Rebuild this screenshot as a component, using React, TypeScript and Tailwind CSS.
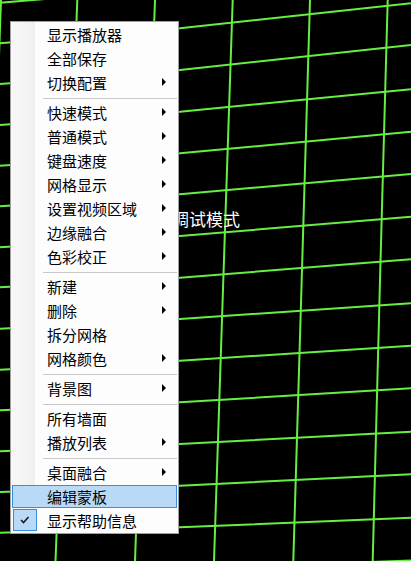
import React from 'react';

type Item = { label: string; sub?: boolean; hover?: boolean; checked?: boolean } | 'sep';

const items: Item[] = [
  { label: '显示播放器' },
  { label: '全部保存' },
  { label: '切换配置', sub: true },
  'sep',
  { label: '快速模式', sub: true },
  { label: '普通模式', sub: true },
  { label: '键盘速度', sub: true },
  { label: '网格显示', sub: true },
  { label: '设置视频区域', sub: true },
  { label: '边缘融合', sub: true },
  { label: '色彩校正', sub: true },
  'sep',
  { label: '新建', sub: true },
  { label: '删除', sub: true },
  { label: '拆分网格' },
  { label: '网格颜色', sub: true },
  'sep',
  { label: '背景图', sub: true },
  'sep',
  { label: '所有墙面' },
  { label: '播放列表', sub: true },
  'sep',
  { label: '桌面融合', sub: true },
  { label: '编辑蒙板', hover: true },
  { label: '显示帮助信息', checked: true },
];

// grid lines measured at x = 0, 180, 411
const rows = [
  [2.7, -12, -37],
  [43.3, 28.3, 3.3],
  [84, 70, 45],
  [125, 111.7, 89.3],
  [165.7, 153.3, 131.7],
  [206.3, 194.3, 174],
  [247.3, 236, 216.7],
  [287.3, 277.7, 259.3],
  [328.7, 319, 303.3],
  [369.7, 360.7, 345.7],
  [410.3, 402.3, 388.3],
  [451.3, 444, 431.7],
  [492, 485.7, 474.3],
  [532.7, 527.3, 517.7],
  [573, 569, 560.5],
];

// columns measured at y = 0, 280, 561
const cols = [
  [1, -9, -20],
  [77.3, 66.5, 55.5],
  [155, 145, 135],
  [232.7, 223.3, 214],
  [310, 301.7, 293.3],
  [387.7, 380, 372.7],
];

function Grid() {
  return (
    <svg className="absolute inset-0" width={411} height={561} viewBox="0 0 411 561">
      {rows.map((r, i) => (
        <polyline
          key={'r' + i}
          points={`0,${r[0]} 180,${r[1]} 411,${r[2]}`}
          fill="none"
          stroke="#66ee44"
          strokeWidth={2}
        />
      ))}
      {cols.map((c, i) => (
        <polyline
          key={'c' + i}
          points={`${c[0]},0 ${c[1]},280 ${c[2]},561`}
          fill="none"
          stroke="#66ee44"
          strokeWidth={2}
        />
      ))}
    </svg>
  );
}

function Arrow() {
  return (
    <svg width="5" height="8" viewBox="0 0 5 8" className="shrink-0">
      <path d="M0 0 L4 4 L0 8 Z" fill="#000" />
    </svg>
  );
}

function Menu() {
  return (
    <div className="absolute left-[10px] top-[21px] w-[169px] border border-[#a0a0a0] bg-[#fdfdfd] pb-[1px]">
      <div className="pointer-events-none absolute left-0 top-0 bottom-0 w-[24px] bg-gradient-to-r from-[#f8f8f8] to-[#f0f0f0]" />
      <div className="relative flex flex-col">
        {items.map((it, i) =>
          it === 'sep' ? (
            <div key={i} className="h-[6px] pt-[4px] pl-[32px] pr-[1px]">
              <div className="h-px bg-[#c8c8c8]" />
            </div>
          ) : (
            <div key={i} className="relative flex h-[24px] items-center">
              {it.hover && (
                <div className="absolute left-[1px] right-[1px] top-[1px] bottom-0 border border-[#3a8fdd] bg-[#b9daf6]" />
              )}
              <div className="relative flex w-[36px] shrink-0 justify-start">
                {it.checked && (
                  <div className="ml-[2px] flex h-[22px] w-[24px] items-center justify-center border border-[#3a8fdd] bg-[#b9daf6]">
                    <svg width="10" height="8" viewBox="0 0 10 8">
                      <path d="M1 4 L3.5 6.5 L8.5 1" fill="none" stroke="#1a1a1a" strokeWidth={1.6} />
                    </svg>
                  </div>
                )}
              </div>
              <span className="relative flex-1 text-[15px] leading-none text-black">{it.label}</span>
              {it.sub && (
                <span className="relative mr-[11px] flex items-center">
                  <Arrow />
                </span>
              )}
            </div>
          )
        )}
      </div>
    </div>
  );
}

export default function App() {
  return (
    <div
      className="relative h-[561px] w-[411px] overflow-hidden bg-black"
      style={{ fontFamily: '"Noto Sans CJK SC", "Noto Sans", sans-serif' }}
    >
      <Grid />
      <div className="absolute left-[172px] top-[208px] text-[17px] leading-[22px] text-white">调试模式</div>
      <Menu />
    </div>
  );
}
